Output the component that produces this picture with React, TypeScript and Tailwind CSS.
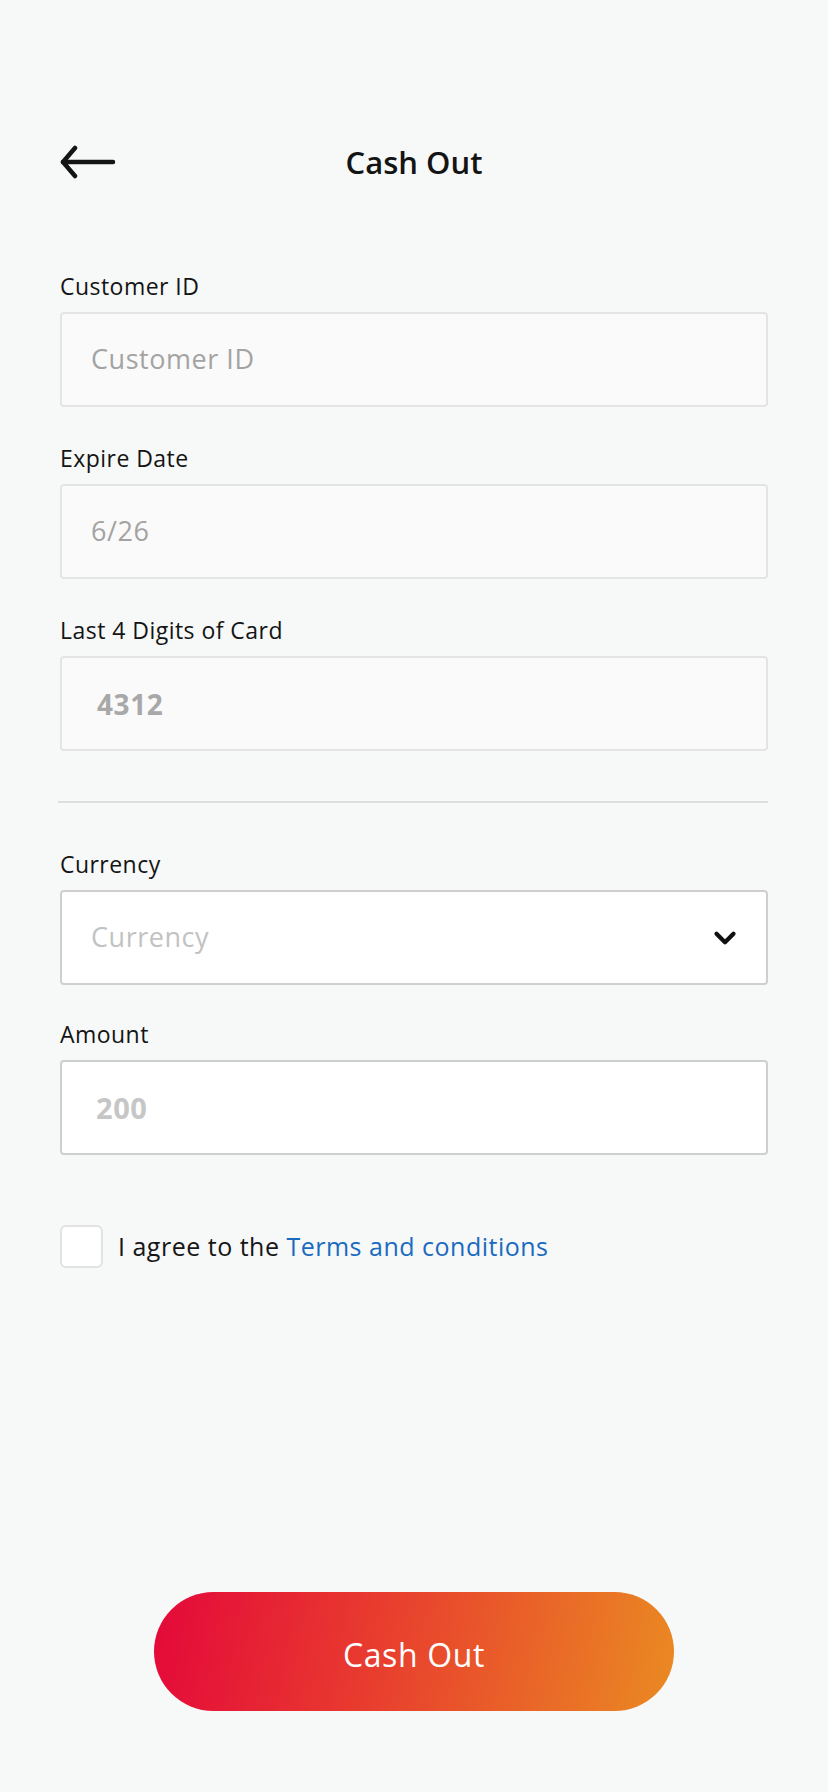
import { ChevronDown } from 'lucide-react';

const font = { fontFamily: '"Open Sans", "Noto Sans", sans-serif' };

function Field({ label, children }: { label: string; children: React.ReactNode }) {
  return (
    <div className="flex flex-col">
      <div className="h-[30px] flex items-center text-[23px] tracking-[0.02em] text-[#141414] leading-none">{label}</div>
      <div className="mt-[11px]">{children}</div>
    </div>
  );
}

export default function App() {
  return (
    <div className="min-h-[1792px] bg-[#f7f8f8] px-[60px] flex flex-col" style={font}>
      <div className="mt-[130px] h-[64px] relative flex items-center justify-center">
        <button className="absolute left-0 top-1/2 -translate-y-1/2 w-[56px] h-[40px] flex items-center">
          <svg width="56" height="34" viewBox="0 0 56 34" fill="none" stroke="#141414" strokeWidth="4.5" strokeLinecap="round" strokeLinejoin="round">
            <path d="M3 17H53" />
            <path d="M15 3L3 17L15 31" />
          </svg>
        </button>
        <h1 className="text-[31px] font-semibold text-[#141414]">Cash Out</h1>
      </div>

      <div className="mt-[77px] flex flex-col gap-[36px]">
        <Field label="Customer ID">
          <div className="h-[95px] rounded-[4px] border-2 border-[#e4e4e4] bg-[#fafafa] flex items-center px-[29px] text-[27px] tracking-[0.02em] text-[#a3a3a3]">Customer ID</div>
        </Field>
        <Field label="Expire Date">
          <div className="h-[95px] rounded-[4px] border-2 border-[#e4e4e4] bg-[#fafafa] flex items-center px-[29px] text-[27px] tracking-[0.02em] text-[#a3a3a3]">6/26</div>
        </Field>
        <Field label="Last 4 Digits of Card">
          <div className="h-[95px] rounded-[4px] border-2 border-[#e4e4e4] bg-[#fafafa] flex items-center px-[35px] text-[28px] tracking-[0.02em] font-bold text-[#a8a8a8]">4312</div>
        </Field>
      </div>

      <div className="mt-[50px] h-[2px] bg-[#dedede] -ml-[2px]" />

      <div className="mt-[46px] flex flex-col gap-[34px]">
        <Field label="Currency">
          <div className="h-[95px] rounded-[4px] border-2 border-[#cfcfcf] bg-white flex items-center justify-between pl-[29px] pr-[24px] text-[27px] tracking-[0.02em] text-[#c2c2c2]">
            <span>Currency</span>
            <ChevronDown size={34} strokeWidth={3} color="#111111" />
          </div>
        </Field>
        <Field label="Amount">
          <div className="h-[95px] rounded-[4px] border-2 border-[#cfcfcf] bg-white flex items-center px-[34px] text-[29px] tracking-[0.02em] font-bold text-[#c6c6c6]">200</div>
        </Field>
      </div>

      <div className="mt-[70px] flex items-center gap-[15px]">
        <div className="w-[43px] h-[43px] rounded-[6px] border-2 border-[#e2e2e2] bg-white" />
        <p className="text-[25px] tracking-[0.02em] text-[#161616]">
          I agree to the <span className="text-[#1a6bc0]">Terms and conditions</span>
        </p>
      </div>

      <div className="mt-[324px] flex justify-center">
        <button className="w-[520px] h-[119px] pt-[6px] rounded-full bg-[linear-gradient(100deg,#e4083a_0%,#e8392f_40%,#ea8a22_100%)] text-white text-[32px] tracking-[0.02em]">
          Cash Out
        </button>
      </div>
    </div>
  );
}
